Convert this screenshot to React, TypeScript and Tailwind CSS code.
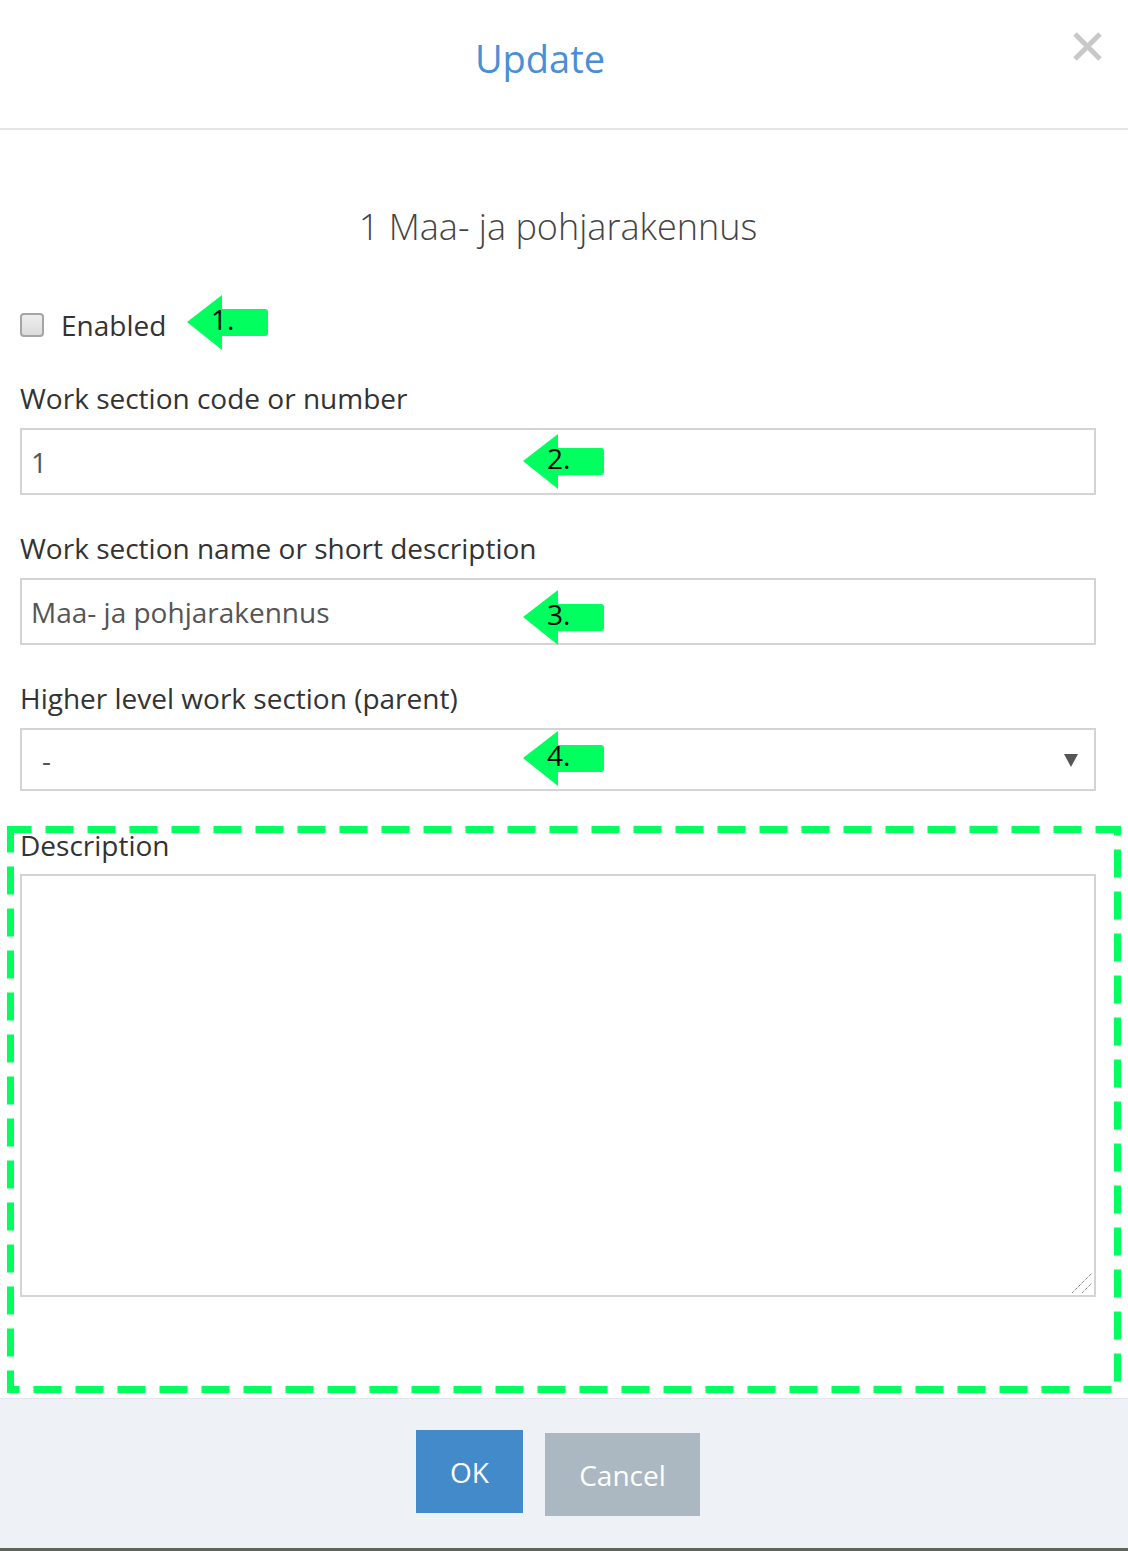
import React from 'react';

type ArrowProps = {
    label: string;
    className: string;
};

// Green pointer used to number the form fields
const Marker: React.FC<ArrowProps> = ({ label, className }) => (
    <div className={`absolute w-[81px] h-[56px] ${className}`}>
        <svg width="81" height="56" viewBox="0 0 81 56" className="absolute inset-0">
            <path
                d="M0 27 L35 0 L35 14 L78 14 Q81 14 81 17 L81 38 Q81 41 78 41 L35 41 L35 55 Z"
                fill="#00ff5f"
            />
        </svg>
        <span className="absolute left-[24px] top-[6px] text-[28px] leading-[36px] text-black">{label}</span>
    </div>
);

const FieldLabel: React.FC<{ children: React.ReactNode; className?: string }> = ({ children, className }) => (
    <div className={`ml-[20px] h-[36px] leading-[36px] text-[28px] text-[#333] ${className ?? ''}`}>{children}</div>
);

const App: React.FC = () => {
    return (
        <div className="relative w-[1128px] h-[1551px] bg-white font-['Open_Sans',sans-serif] flex flex-col overflow-hidden">
            {/* header */}
            <div className="relative h-[130px] border-b-2 border-[#e5e5e5] flex justify-center pr-[48px] shrink-0">
                <h2 className="mt-[33px] h-[50px] leading-[50px] text-[38px] text-[#4a8fd5]">Update</h2>
                <button className="absolute left-[1072px] top-[31px] w-[31px] h-[31px]" aria-label="Close">
                    <svg width="31" height="31" viewBox="0 0 31 31">
                        <path d="M3 3 L28 28 M28 3 L3 28" stroke="#c8c8c8" strokeWidth="5" />
                    </svg>
                </button>
            </div>

            {/* body */}
            <div className="flex-1 flex flex-col">
                <div className="mt-[73px] h-[48px] leading-[48px] text-center pr-[12px] text-[36px] font-light text-[#444]">
                    1 Maa- ja pohjarakennus
                </div>

                <label className="mt-[54px] ml-[20px] h-[40px] flex items-center">
                    <span className="w-[24px] h-[24px] rounded-[4px] border-2 border-[#a5a5a5] bg-gradient-to-b from-[#eeeeee] to-[#dcdcdc]" />
                    <span className="ml-[17px] text-[28px] text-[#333]">Enabled</span>
                </label>

                <FieldLabel className="mt-[35px]">Work section code or number</FieldLabel>
                <div className="mt-[12px] ml-[20px] w-[1076px] h-[67px] border-2 border-[#d4d4d4] flex items-center px-[9px] text-[28px] text-[#555]">
                    1
                </div>

                <FieldLabel className="mt-[35px]">Work section name or short description</FieldLabel>
                <div className="mt-[12px] ml-[20px] w-[1076px] h-[67px] border-2 border-[#d4d4d4] flex items-center px-[9px] text-[28px] text-[#555]">
                    Maa- ja pohjarakennus
                </div>

                <FieldLabel className="mt-[35px]">Higher level work section (parent)</FieldLabel>
                <div className="mt-[12px] ml-[20px] w-[1076px] h-[63px] border-2 border-[#d4d4d4] flex items-center pl-[20px] pr-[16px] text-[28px] text-[#555]">
                    <span className="flex-1">-</span>
                    <svg width="14" height="14" viewBox="0 0 14 14">
                        <path d="M0 1 L14 1 L7 14 Z" fill="#555" />
                    </svg>
                </div>

                {/* description block */}
                <div className="relative mt-[35px] h-[572px]">
                    <svg width="1114" height="567" className="absolute left-[7px] top-0 pointer-events-none">
                        <rect
                            x="3.5"
                            y="3.5"
                            width="1107"
                            height="560"
                            fill="none"
                            stroke="#00ff5f"
                            strokeWidth="7"
                            strokeDasharray="28 14"
                            strokeDashoffset="7"
                        />
                    </svg>
                    <FieldLabel className="mt-[1px]">Description</FieldLabel>
                    <div className="relative mt-[11px] ml-[20px] w-[1076px] h-[423px]">
                        <textarea
                            className="block w-full h-full border-2 border-[#d4d4d4] outline-none resize-none"
                            defaultValue=""
                        />
                        {/* resize grip */}
                        <svg width="24" height="24" className="absolute right-[2px] bottom-[2px]">
                            <path d="M2 22 L22 2 M12 22 L22 12" stroke="#555" strokeWidth="1" strokeDasharray="1 1" />
                        </svg>
                    </div>
                </div>
            </div>

            {/* footer */}
            <div className="h-[153px] shrink-0 bg-[#eef1f6] border-t border-[#e2e6ea] border-b-[3px] border-b-[#5d655c] flex items-start">
                <button className="ml-[416px] mt-[31px] w-[107px] h-[83px] bg-[#428ac9] text-white text-[28px]">OK</button>
                <button className="ml-[22px] mt-[34px] w-[155px] h-[83px] bg-[#abb8c2] text-white text-[28px]">Cancel</button>
            </div>

            <Marker label="1." className="left-[187px] top-[295px]" />
            <Marker label="2." className="left-[523px] top-[434px]" />
            <Marker label="3." className="left-[523px] top-[590px]" />
            <Marker label="4." className="left-[523px] top-[731px]" />
        </div>
    );
};

export default App;
